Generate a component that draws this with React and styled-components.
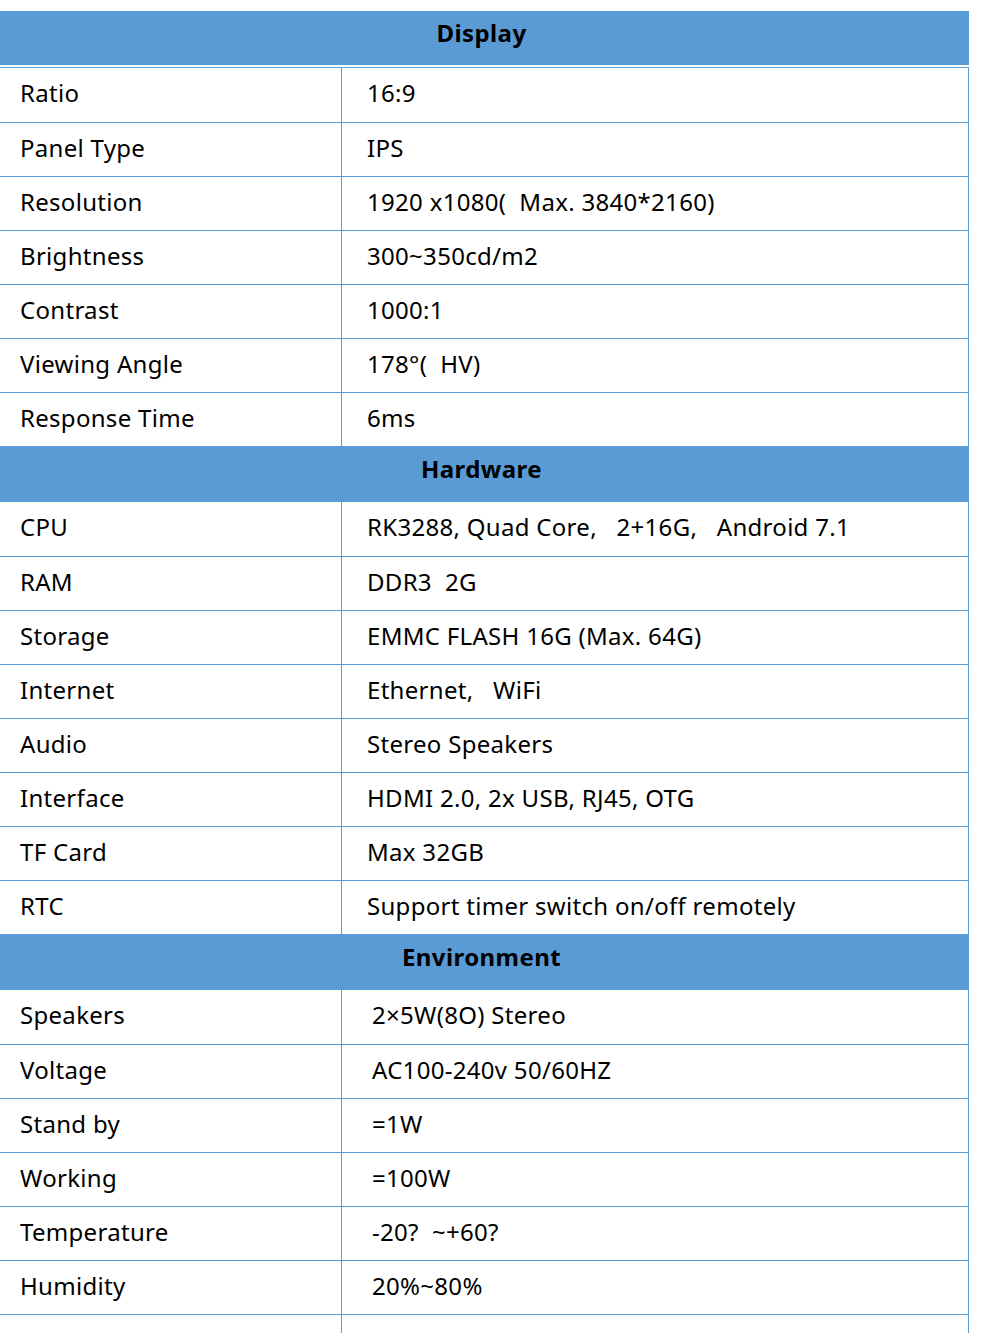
import React from "react";
import styled, { createGlobalStyle } from "styled-components";

const sections = [
  {
    title: "Display",
    first: true,
    indent: 25,
    rows: [
      ["Ratio", "16:9"],
      ["Panel Type", "IPS"],
      ["Resolution", "1920 x1080(  Max. 3840*2160)"],
      ["Brightness", "300~350cd/m2"],
      ["Contrast", "1000:1"],
      ["Viewing Angle", "178°(  HV)"],
      ["Response Time", "6ms"],
    ],
  },
  {
    title: "Hardware",
    indent: 25,
    rows: [
      ["CPU", "RK3288, Quad Core,   2+16G,   Android 7.1"],
      ["RAM", "DDR3  2G"],
      ["Storage", "EMMC FLASH 16G (Max. 64G)"],
      ["Internet", "Ethernet,   WiFi"],
      ["Audio", "Stereo Speakers"],
      ["Interface", "HDMI 2.0, 2x USB, RJ45, OTG"],
      ["TF Card", "Max 32GB"],
      ["RTC", "Support timer switch on/off remotely"],
    ],
  },
  {
    title: "Environment",
    indent: 30,
    rows: [
      ["Speakers", "2×5W(8O) Stereo"],
      ["Voltage", "AC100-240v 50/60HZ"],
      ["Stand by", "=1W"],
      ["Working", "=100W"],
      ["Temperature", "-20?  ~+60?"],
      ["Humidity", "20%~80%"],
      ["", ""],
    ],
  },
];

export default function App() {
  return (
    <>
      <GlobalStyle />
      <Page>
        {sections.map((section) => (
          <Section key={section.title}>
            <SectionHead $first={section.first}>{section.title}</SectionHead>
            <Rows $first={section.first}>
              {section.rows.map(([label, value], i) => (
                <Row key={i}>
                  <Label>{label}</Label>
                  <Value $indent={section.indent}>{value}</Value>
                </Row>
              ))}
            </Rows>
          </Section>
        ))}
      </Page>
    </>
  );
}

const GlobalStyle = createGlobalStyle`
  html, body {
    margin: 0;
    padding: 0;
    background: #ffffff;
  }
  body {
    font-family: "Noto Sans", "Open Sans", sans-serif;
    color: #000000;
  }
`;

const Page = styled.div`
  width: 969px;
  padding-top: 11px;
`;

const Section = styled.section`
  display: flex;
  flex-direction: column;
`;

const SectionHead = styled.div`
  height: ${(p) => (p.$first ? "54px" : "56px")};
  background: #5b9bd5;
  display: flex;
  align-items: center;
  justify-content: center;
  font-size: 24px;
  font-weight: 700;
  letter-spacing: 0.4px;
  padding-bottom: 11px;
  padding-right: 6px;
  box-sizing: border-box;
`;

const Rows = styled.div`
  display: flex;
  flex-direction: column;
  width: 968px;
  border-right: 1px solid #5b9bd5;
  margin-top: ${(p) => (p.$first ? "2px" : "0")};
  border-top: ${(p) => (p.$first ? "1px solid #5b9bd5" : "none")};
`;

const Row = styled.div`
  display: grid;
  grid-template-columns: 341px 1fr;
  height: 54px;
  box-sizing: border-box;
  & + & {
    border-top: 1px solid #5b9bd5;
  }
`;

const Label = styled.div`
  display: flex;
  align-items: center;
  padding-left: 20px;
  padding-bottom: 5px;
  font-size: 24px;
  letter-spacing: 0.3px;
  white-space: pre;
`;

const Value = styled.div`
  display: flex;
  align-items: center;
  padding-left: ${(p) => p.$indent}px;
  padding-bottom: 5px;
  border-left: 1px solid #5b9bd5;
  font-size: 24px;
  letter-spacing: 0.3px;
  white-space: pre;
`;
